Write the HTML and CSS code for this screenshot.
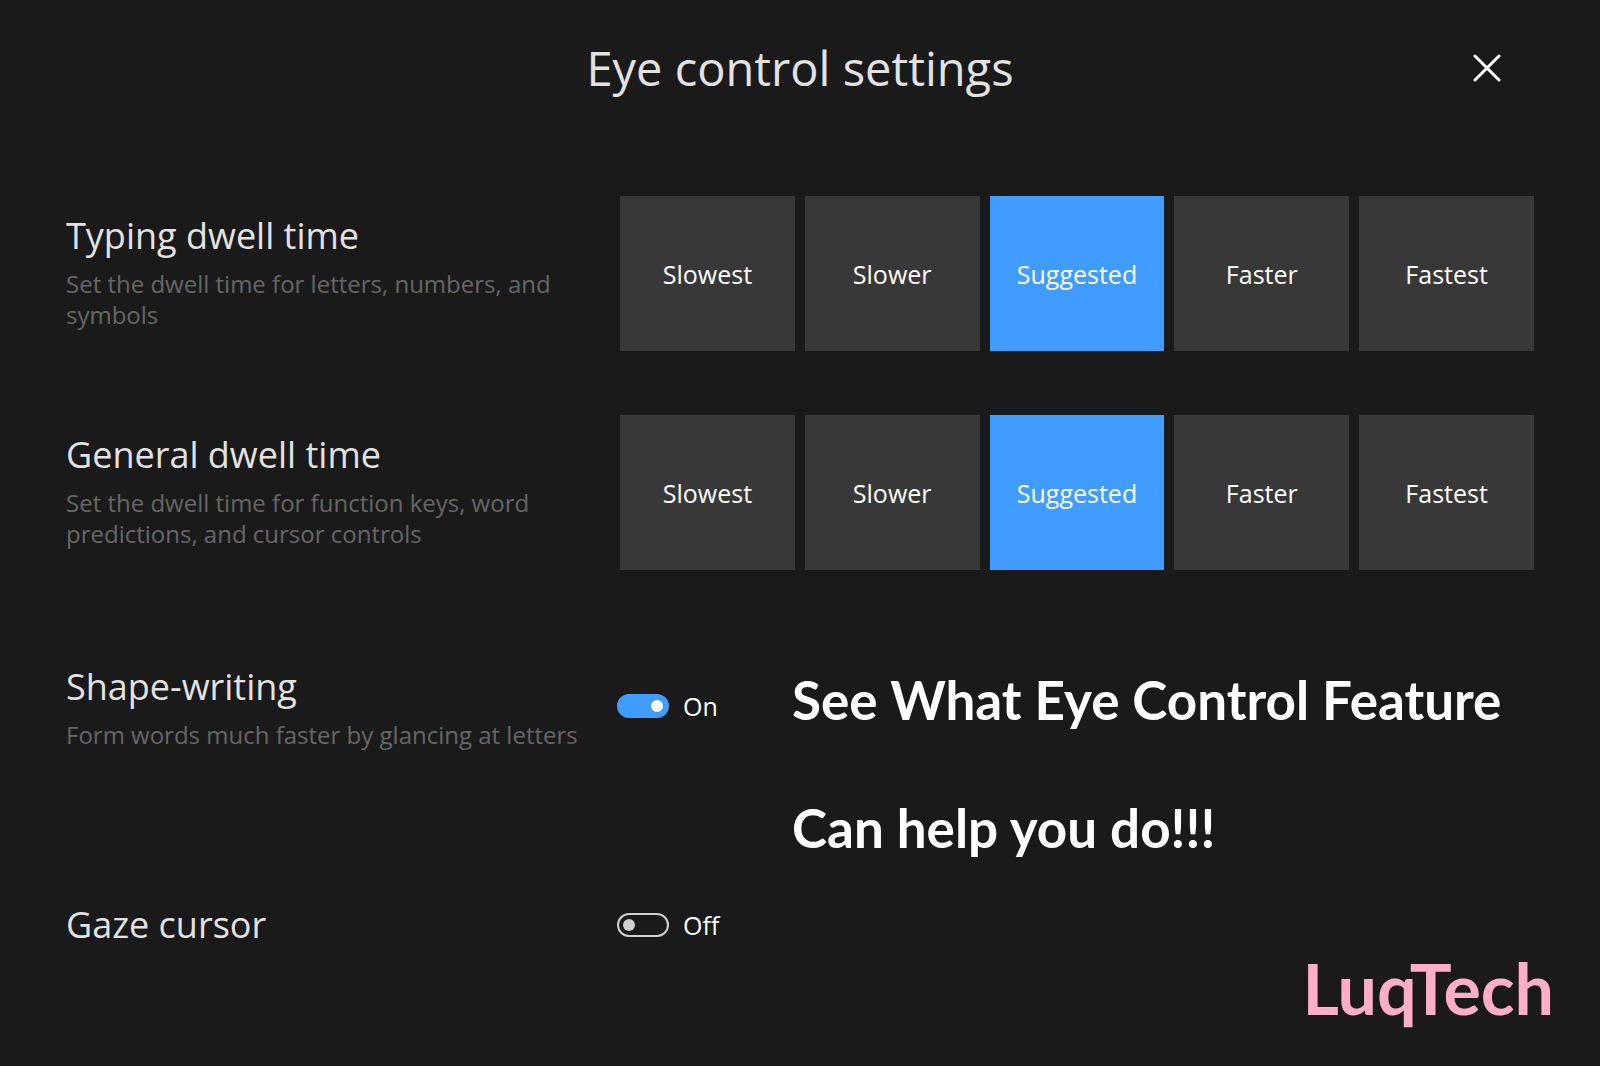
FILE: index.html
```
<!DOCTYPE html>
<html lang="en">
<head>
  <meta charset="UTF-8" />
  <meta name="viewport" content="width=device-width, initial-scale=1.0"/>
  <title>Eye control settings</title>
  <link rel="stylesheet" href="styles.css">
</head>
<body>
  <header class="header">
    <h1>Eye control settings</h1>
    <button class="close" type="button" aria-label="Close">
      <svg width="28" height="28" viewBox="0 0 28 28" fill="none" stroke="#fff" stroke-width="3" stroke-linecap="round">
        <path d="M2 2L26 26M26 2L2 26"/>
      </svg>
    </button>
  </header>

  <main>
    <section class="row">
      <div class="info">
        <h2 id="typing">Typing dwell time</h2>
        <p>Set the dwell time for letters, numbers, and symbols</p>
      </div>
      <div class="tiles" role="radiogroup" aria-labelledby="typing">
        <label class="tile"><input type="radio" name="typing">Slowest</label>
        <label class="tile"><input type="radio" name="typing">Slower</label>
        <label class="tile"><input type="radio" name="typing" checked>Suggested</label>
        <label class="tile"><input type="radio" name="typing">Faster</label>
        <label class="tile"><input type="radio" name="typing">Fastest</label>
      </div>
    </section>

    <section class="row">
      <div class="info">
        <h2 id="general">General dwell time</h2>
        <p>Set the dwell time for function keys, word predictions, and cursor controls</p>
      </div>
      <div class="tiles" role="radiogroup" aria-labelledby="general">
        <label class="tile"><input type="radio" name="general">Slowest</label>
        <label class="tile"><input type="radio" name="general">Slower</label>
        <label class="tile"><input type="radio" name="general" checked>Suggested</label>
        <label class="tile"><input type="radio" name="general">Faster</label>
        <label class="tile"><input type="radio" name="general">Fastest</label>
      </div>
    </section>

    <section class="switches">
      <div class="switch-list">
        <div class="switch-row">
          <div class="info">
            <h2>Shape-writing</h2>
            <p>Form words much faster by glancing at letters</p>
          </div>
          <label class="switch"><input type="checkbox" checked>On</label>
        </div>
        <div class="switch-row">
          <div class="info">
            <h2>Gaze cursor</h2>
          </div>
          <label class="switch"><input type="checkbox">Off</label>
        </div>
      </div>
      <p class="caption">See What Eye Control Feature<br>Can help you do!!!</p>
    </section>
  </main>

  <div class="signature">LuqTech</div>
</body>
</html>
```
FILE: styles.css
```
* {
  box-sizing: border-box;
}
body {
  position: relative;
  min-height: 100vh;
  margin: 0;
  padding: 32px 66px 0;
  background-color: #1a1a1a;
  color: #fff;
  font-family: "Segoe UI", "Open Sans", sans-serif;
  font-size: 25px;
}
h1, h2, p {
  margin: 0;
  font-weight: 400;
}
.header {
  display: grid;
  grid-template-columns: 1fr auto 1fr;
  align-items: center;
  margin-bottom: 92px;
}
h1 {
  grid-column: 2;
  font-size: 47px;
  line-height: 68px;
  color: #e2e2e2;
}
.close {
  display: flex;
  align-items: center;
  justify-content: center;
  justify-self: end;
  width: 94px;
  height: 72px;
  padding: 0;
  border: none;
  background: none;
  cursor: pointer;
}
.row {
  display: grid;
  grid-template-columns: 554px 1fr;
  align-items: center;
  margin-bottom: 64px;
}
.row .info {
  padding-bottom: 6px;
}
h2 {
  font-size: 36px;
  line-height: 50px;
  color: #e2e2e2;
}
.info p {
  margin-top: 7px;
  font-size: 24px;
  line-height: 31px;
  color: #666;
}
.row .info p {
  max-width: 520px;
}
.tiles {
  display: grid;
  grid-template-columns: repeat(5, 1fr);
  gap: 10px;
}
.tile {
  display: flex;
  align-items: center;
  justify-content: center;
  height: 155px;
  background-color: #383838;
  cursor: pointer;
}
.tile input {
  appearance: none;
  width: 0;
  margin: 0;
}
.tile:has(:checked) {
  background-color: #409cff;
}
.switches {
  display: grid;
  grid-template-columns: 650px 1fr;
  gap: 76px;
  margin-top: -6px;
}
.switch-list {
  display: grid;
  gap: 64px;
}
.switch-row {
  display: grid;
  grid-template-columns: 551px auto;
  align-items: center;
  height: 155px;
}
.switch {
  display: flex;
  align-items: center;
  gap: 14px;
  cursor: pointer;
}
.switch input {
  appearance: none;
  display: flex;
  align-items: center;
  width: 52px;
  height: 24px;
  margin: 0;
  padding: 0 4px;
  border: 2px solid #d0d0d0;
  border-radius: 12px;
}
.switch input::before {
  content: "";
  width: 12px;
  height: 12px;
  border-radius: 50%;
  background-color: #d0d0d0;
}
.switch input:checked {
  justify-content: flex-end;
  border-color: #409cff;
  background-color: #409cff;
}
.switch input:checked::before {
  background-color: #fff;
}
.caption {
  padding-top: 8px;
  font-family: "Lato", sans-serif;
  font-size: 53px;
  font-weight: 700;
  line-height: 128px;
  white-space: nowrap;
}
.signature {
  position: absolute;
  right: 46px;
  bottom: 38px;
  color: #ffaec9;
  font-family: "Lato", sans-serif;
  font-size: 70px;
  font-weight: 700;
  line-height: 80px;
}
```
